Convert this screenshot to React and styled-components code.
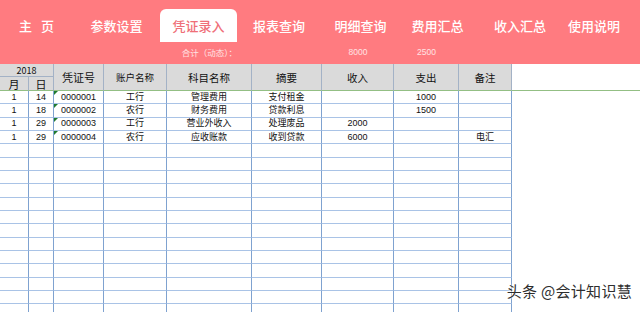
import React from "react";
import styled, { createGlobalStyle } from "styled-components";

const PINK = "#ff7b80";
const COLS = "29px 25px 50px 63px 85px 70px 72px 65px 53px";
const FONT = `"Liberation Sans", "Noto Sans CJK SC", sans-serif`;

const NAV = [
  { label: "主 页", width: 73 },
  { label: "参数设置", width: 87 },
  { label: "凭证录入", width: 77, active: true },
  { label: "报表查询", width: 84 },
  { label: "明细查询", width: 79 },
  { label: "费用汇总", width: 75 },
  { label: "收入汇总", width: 90 },
  { label: "使用说明", width: 58 },
];

const HEAD = ["凭证号", "账户名称", "科目名称", "摘要", "收入", "支出", "备注"];

const ROWS = [
  ["1", "14", "0000001", "工行", "管理费用", "支付租金", "", "1000", ""],
  ["1", "18", "0000002", "农行", "财务费用", "贷款利息", "", "1500", ""],
  ["1", "29", "0000003", "工行", "营业外收入", "处理废品", "2000", "", ""],
  ["1", "29", "0000004", "农行", "应收账款", "收到贷款", "6000", "", "电汇"],
];

const EMPTY_ROWS = 13;

const GlobalStyle = createGlobalStyle`
  html, body {
    margin: 0;
    padding: 0;
    background: #fff;
  }
  * {
    box-sizing: border-box;
  }
`;

const Page = styled.div`
  position: relative;
  width: 640px;
  height: 312px;
  overflow: hidden;
  font-family: ${FONT};
  background: #fff;
`;

const NavBar = styled.div`
  height: 64px;
  background: ${PINK};
  display: flex;
  flex-direction: column;
`;

const NavRow = styled.div`
  display: flex;
  padding-top: 9px;
  height: 42px;
`;

const NavItem = styled.div`
  width: ${({ $width }) => $width}px;
  height: 33px;
  line-height: 33px;
  text-align: center;
  font-family: "Noto Sans CJK SC", sans-serif;
  font-size: 13px;
  font-weight: 500;
  word-spacing: 6px;
  white-space: pre;
  color: ${({ $active }) => ($active ? "#ef6f78" : "#fff")};
  background: ${({ $active }) => ($active ? "#fff" : "transparent")};
  border-radius: 6px 6px 0 0;
`;

const TotalsRow = styled.div`
  display: grid;
  grid-template-columns: ${COLS};
  height: 22px;
  align-items: center;
  font-size: 8.5px;
  color: #ffe3e4;
`;

const Total = styled.span`
  grid-column: ${({ $col }) => $col};
  text-align: center;
  padding-bottom: 2px;
`;

const Sheet = styled.div`
  display: flex;
  align-items: flex-start;
`;

const Table = styled.div`
  width: 512px;
  flex: none;
  display: grid;
  grid-template-columns: ${COLS};
  grid-template-rows: 13px 14px;
  grid-auto-rows: 13.33px;
  color: #111;
`;

const HeadCell = styled.div`
  grid-column: ${({ $col }) => $col};
  grid-row: ${({ $row }) => $row};
  background: #dadada;
  border-right: 1px solid #a3b2c6;
  border-bottom: 1px solid ${({ $sub }) => ($sub ? "#a3b2c6" : "#93bf84")};
  display: flex;
  align-items: center;
  justify-content: center;
  font-size: ${({ $size }) => $size || 10.5}px;
  font-family: "Noto Sans CJK SC", "Liberation Sans", sans-serif;
`;

const Cell = styled.div`
  position: relative;
  border-right: 1px solid #7fa2d0;
  border-bottom: 1px solid #a9c3e6;
  display: flex;
  align-items: center;
  justify-content: center;
  font-size: 9px;
  line-height: 1;
  white-space: nowrap;

  ${({ $flag }) =>
    $flag &&
    `
    &::before {
      content: "";
      position: absolute;
      left: 0;
      top: 0;
      border-top: 4px solid #1f7a30;
      border-right: 4px solid transparent;
    }
  `}
`;

const Filler = styled.div`
  flex: 1;
  height: 27px;
  border-bottom: 1px solid #93bf84;
`;

const Watermark = styled.div`
  position: absolute;
  right: 8px;
  bottom: 11px;
  font-family: "Noto Sans CJK SC", sans-serif;
  font-size: 15px;
  color: #2e2e2e;
  text-shadow: 0 0 2px #fff, 0 0 2px #fff;
  letter-spacing: 0.3px;
`;

const App = () => {
  const empty = Array.from({ length: EMPTY_ROWS }, () =>
    Array(9).fill("")
  );
  const rows = [...ROWS, ...empty];

  return (
    <Page>
      <GlobalStyle />
      <NavBar>
        <NavRow>
          {NAV.map((item) => (
            <NavItem key={item.label} $width={item.width} $active={item.active}>
              {item.label}
            </NavItem>
          ))}
        </NavRow>
        <TotalsRow>
          <Total $col="5">合计（动态）：</Total>
          <Total $col="7">8000</Total>
          <Total $col="8">2500</Total>
        </TotalsRow>
      </NavBar>

      <Sheet>
        <Table>
          <HeadCell $col="1 / 3" $row="1" $sub $size={9}>
            2018
          </HeadCell>
          <HeadCell $col="1" $row="2" $size={11}>
            月
          </HeadCell>
          <HeadCell $col="2" $row="2" $size={11}>
            日
          </HeadCell>
          {HEAD.map((h, i) => (
            <HeadCell
              key={h}
              $col={`${i + 3}`}
              $row="1 / 3"
              $size={i === 0 ? 11 : i === 1 ? 9.5 : 10.5}
            >
              {h}
            </HeadCell>
          ))}

          {rows.map((row, r) =>
            row.map((value, c) => (
              <Cell key={`${r}-${c}`} $flag={c === 2 && value !== ""}>
                {value}
              </Cell>
            ))
          )}
        </Table>
        <Filler />
      </Sheet>

      <Watermark>头条 @会计知识慧</Watermark>
    </Page>
  );
};

export default App;
